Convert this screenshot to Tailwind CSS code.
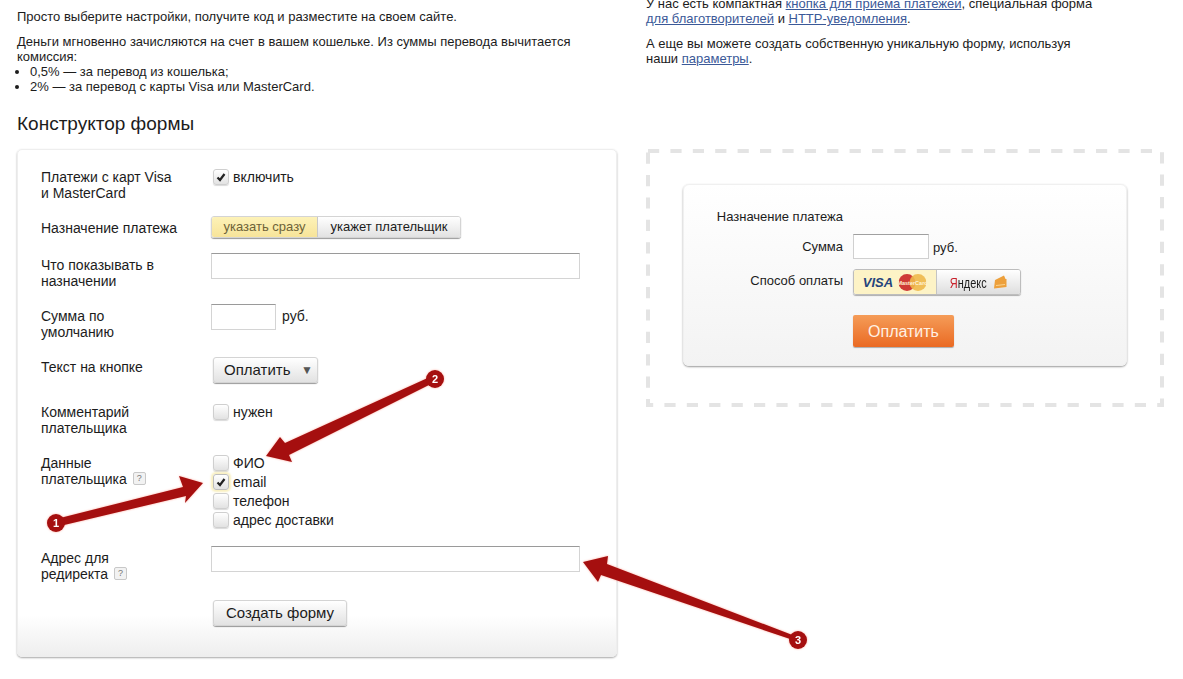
<!DOCTYPE html>
<html lang="ru">
<head>
    <meta charset="UTF-8">
    <title>Конструктор формы</title>
    <script src="https://cdn.jsdelivr.net/npm/@tailwindcss/browser@4"></script>
</head>
<body class="bg-white overflow-hidden h-[679px] relative font-['Liberation_Sans',Arial,sans-serif] text-[#1c1c1c]">
    <div class="flex pl-[17px] items-start">
        <!-- left column -->
        <div class="w-[600px] pt-[9px] shrink-0">
            <div class="text-[13px] leading-[15px]">
                <p>Просто выберите настройки, получите код и разместите на своем сайте.</p>
                <p class="mt-[10px] w-[570px]">Деньги мгновенно зачисляются на счет в вашем кошельке. Из суммы перевода вычитается комиссия:</p>
                <ul class="list-disc pl-[13px]">
                    <li>0,5% — за перевод из кошелька;</li>
                    <li>2% — за перевод с карты Visa или MasterCard.</li>
                </ul>
            </div>
            <h2 class="text-[19px] leading-[22px] mt-[19px]">Конструктор формы</h2>

            <div class="mt-[14px] h-[508px] rounded-[5px] border border-[#eeeeee] bg-[linear-gradient(to_bottom,#ffffff_0,#ffffff_92%,#eeeeee_100%)] shadow-[0_1px_2px_rgba(0,0,0,0.35)] pl-[23px] pt-[19px] text-[14px] leading-[16px]">
                <!-- visa / mastercard -->
                <div class="grid grid-cols-[170px_1fr] h-[47px]">
                    <div>Платежи с карт Visa<br>и MasterCard</div>
                    <label class="flex items-start gap-[4px] pl-[2px]">
                        <span class="w-[16px] h-[16px] rounded-[3px] border border-[#cfcfcf] bg-[linear-gradient(to_bottom,#ffffff,#e2e2e2)] shadow-[0_1px_1px_rgba(0,0,0,0.15)] flex items-center justify-center">
                            <svg viewBox="0 0 12 12" class="w-[12px] h-[12px]"><path d="M2.5 6.5 L5 9 L9.5 3" fill="none" stroke="#222" stroke-width="2.2"/></svg>
                        </span>
                        <span>включить</span>
                    </label>
                </div>
                <!-- purpose -->
                <div class="grid grid-cols-[170px_1fr] h-[37px] items-start">
                    <div class="pt-[4px]">Назначение платежа</div>
                    <div class="flex w-[250px] h-[22px] rounded-[3px] shadow-[0_1px_1px_rgba(0,0,0,0.4)] border border-[#d4d4d4] text-[13px] leading-[20px] overflow-hidden">
                        <div class="w-[106px] text-center text-[#6d6339] bg-[linear-gradient(to_bottom,#fdf2b8,#f7e49a)] border-r border-[#c8c8c8]">указать сразу</div>
                        <div class="flex-1 text-center bg-[linear-gradient(to_bottom,#ffffff,#e2e2e2)]">укажет плательщик</div>
                    </div>
                </div>
                <!-- what to show -->
                <div class="grid grid-cols-[170px_1fr] h-[51px] items-start">
                    <div class="pt-[4px]">Что показывать в<br>назначении</div>
                    <div class="w-[369px] h-[26px] border border-[#d4d4d4] border-t-[#9a9a9a] bg-white"></div>
                </div>
                <!-- default sum -->
                <div class="grid grid-cols-[170px_1fr] h-[53px] items-start">
                    <div class="pt-[4px]">Сумма по<br>умолчанию</div>
                    <div class="flex items-start gap-[6px]">
                        <div class="w-[65px] h-[26px] border border-[#d4d4d4] border-t-[#9a9a9a] bg-white"></div>
                        <span class="pt-[4px]">руб.</span>
                    </div>
                </div>
                <!-- button text -->
                <div class="grid grid-cols-[170px_1fr] h-[47px] items-start">
                    <div class="pt-[2px]">Текст на кнопке</div>
                    <div class="ml-[2px] w-[105px] h-[26px] rounded-[3px] border border-[#d4d4d4] bg-[linear-gradient(to_bottom,#ffffff,#e2e2e2)] shadow-[0_1px_1px_rgba(0,0,0,0.4)] flex items-center justify-between pl-[10px] pr-[4px] text-[15px]">
                        <span>Оплатить</span><span class="text-[12px] text-[#555555]">▼</span>
                    </div>
                </div>
                <!-- comment -->
                <div class="grid grid-cols-[170px_1fr] h-[51px] items-start">
                    <div>Комментарий<br>плательщика</div>
                    <label class="flex items-start gap-[4px] pl-[2px]">
                        <span class="w-[16px] h-[16px] rounded-[3px] border border-[#cfcfcf] bg-[linear-gradient(to_bottom,#ffffff,#e2e2e2)] shadow-[0_1px_1px_rgba(0,0,0,0.15)]"></span>
                        <span>нужен</span>
                    </label>
                </div>
                <!-- payer data -->
                <div class="grid grid-cols-[170px_1fr] h-[91px] items-start">
                    <div>Данные<br>плательщика
                        <span class="inline-block w-[13px] h-[13px] mt-[1px] ml-[2px] rounded-[2px] border border-[#c8c8c8] bg-[#f2f2f2] text-[9px] leading-[11px] text-center text-[#777777] align-top">?</span>
                    </div>
                    <div class="flex flex-col gap-[3px] pl-[2px]">
                        <label class="flex items-start gap-[4px]">
                            <span class="w-[16px] h-[16px] rounded-[3px] border border-[#cfcfcf] bg-[linear-gradient(to_bottom,#ffffff,#e2e2e2)] shadow-[0_1px_1px_rgba(0,0,0,0.15)]"></span>
                            <span>ФИО</span>
                        </label>
                        <label class="flex items-start gap-[4px]">
                            <span class="w-[16px] h-[16px] rounded-[3px] border border-[#bdbdbd] bg-[linear-gradient(to_bottom,#ffffff,#e2e2e2)] shadow-[0_0_2px_2px_rgba(245,230,150,0.6)] flex items-center justify-center">
                                <svg viewBox="0 0 12 12" class="w-[12px] h-[12px]"><path d="M2.5 6.5 L5 9 L9.5 3" fill="none" stroke="#222" stroke-width="2.2"/></svg>
                            </span>
                            <span>email</span>
                        </label>
                        <label class="flex items-start gap-[4px]">
                            <span class="w-[16px] h-[16px] rounded-[3px] border border-[#cfcfcf] bg-[linear-gradient(to_bottom,#ffffff,#e2e2e2)] shadow-[0_1px_1px_rgba(0,0,0,0.15)]"></span>
                            <span>телефон</span>
                        </label>
                        <label class="flex items-start gap-[4px]">
                            <span class="w-[16px] h-[16px] rounded-[3px] border border-[#cfcfcf] bg-[linear-gradient(to_bottom,#ffffff,#e2e2e2)] shadow-[0_1px_1px_rgba(0,0,0,0.15)]"></span>
                            <span>адрес доставки</span>
                        </label>
                    </div>
                </div>
                <!-- redirect -->
                <div class="grid grid-cols-[170px_1fr] h-[54px] items-start">
                    <div class="pt-[4px]">Адрес для<br>редиректа
                        <span class="inline-block w-[13px] h-[13px] mt-[1px] ml-[2px] rounded-[2px] border border-[#c8c8c8] bg-[#f2f2f2] text-[9px] leading-[11px] text-center text-[#777777] align-top">?</span>
                    </div>
                    <div class="w-[369px] h-[26px] border border-[#d4d4d4] border-t-[#9a9a9a] bg-white"></div>
                </div>
                <!-- submit -->
                <div class="grid grid-cols-[170px_1fr]">
                    <div></div>
                    <div class="ml-[2px] w-[134px] h-[26px] rounded-[3px] border border-[#d4d4d4] bg-[linear-gradient(to_bottom,#ffffff,#e2e2e2)] shadow-[0_1px_1px_rgba(0,0,0,0.4)] flex items-center justify-center text-[15px]">Создать форму</div>
                </div>
            </div>
        </div>

        <!-- right column -->
        <div class="ml-[29px] w-[518px] -mt-[4px] shrink-0">
            <div class="text-[13px] leading-[15px]">
                <p>У нас есть компактная <a class="text-[#3b5998] underline">кнопка для приема платежей</a>, специальная форма<br><a class="text-[#3b5998] underline">для благотворителей</a> и <a class="text-[#3b5998] underline">HTTP-уведомления</a>.</p>
                <p class="mt-[10px]">А еще вы можете создать собственную уникальную форму, используя<br>наши <a class="text-[#3b5998] underline">параметры</a>.</p>
            </div>

            <div class="relative mt-[83px] h-[258px] pl-[37px] pt-[35px]">
                <svg class="absolute inset-0 w-[518px] h-[258px]" viewBox="0 0 518 258"><rect x="2" y="2" width="514" height="254" fill="none" stroke="#e4e4e4" stroke-width="4" stroke-dasharray="11.2 11.2"/></svg>
                <!-- preview card -->
                <div class="relative w-[444px] h-[182px] rounded-[6px] border border-[#f0f0f0] bg-[linear-gradient(to_bottom,#ffffff,#f3f3f3)] shadow-[0_1px_2px_rgba(0,0,0,0.4)] text-[13px] leading-[15px] pt-[24px]">
                    <div class="grid grid-cols-[159px_1fr] gap-x-[10px] h-[25px]">
                        <div class="text-right">Назначение платежа</div>
                    </div>
                    <div class="grid grid-cols-[159px_1fr] gap-x-[10px] h-[35px] items-start">
                        <div class="text-right pt-[5px]">Сумма</div>
                        <div class="flex items-start gap-[4px]">
                            <div class="w-[76px] h-[25px] border border-[#d0d0d0] border-t-[#a0a0a0] bg-white"></div>
                            <span class="pt-[6px]">руб.</span>
                        </div>
                    </div>
                    <div class="grid grid-cols-[159px_1fr] gap-x-[10px] h-[46px] items-start">
                        <div class="text-right pt-[4px]">Способ оплаты</div>
                        <div class="flex w-[168px] h-[26px] rounded-[3px] border border-[#bdbdbd] shadow-[0_1px_1px_rgba(0,0,0,0.3)] overflow-hidden">
                            <div class="w-[83px] flex items-center justify-center gap-[5px] bg-[#fdf3c6] border-r border-[#c4c4c4]">
                                <span class="font-bold italic text-[13px] text-[#24437c]">VISA</span>
                                <svg viewBox="0 0 29 17" class="w-[29px] h-[17px]">
                                    <circle cx="9" cy="8.5" r="8.5" fill="#cf3a36"/>
                                    <circle cx="20" cy="8.5" r="8.5" fill="#eeb84a" fill-opacity="0.9"/>
                                    <text x="14.5" y="10.5" text-anchor="middle" font-size="5.5" font-weight="700" fill="#fff3d6" font-family="Liberation Sans">MasterCard</text>
                                </svg>
                            </div>
                            <div class="flex-1 flex items-center justify-center gap-[3px] bg-[linear-gradient(to_bottom,#ffffff,#dedede)]">
                                <span class="inline-block -mx-[7px] scale-x-[0.73] text-[15px]"><span class="text-[#c8212b]">Я</span>ндекс</span>
                                <svg viewBox="0 0 14 14" class="w-[14px] h-[14px] ml-[4px]">
                                    <path d="M2 5 L11 0.5 L12.5 4 L13.5 4 V12 L1 13.5 Z" fill="#eda03c"/>
                                    <path d="M3 10.5 L12 9.5" stroke="#fbd48e" stroke-width="1"/>
                                </svg>
                            </div>
                        </div>
                    </div>
                    <div class="grid grid-cols-[159px_1fr] gap-x-[10px]">
                        <div></div>
                        <div class="w-[101px] h-[32px] rounded-[2px] bg-[linear-gradient(to_bottom,#f59c58,#ea6a23)] shadow-[0_1px_1px_rgba(0,0,0,0.3)] flex items-center justify-center text-[16px] text-[#fff1e4]">Оплатить</div>
                    </div>
                </div>
            </div>
        </div>
    </div>

    <!-- annotation arrows -->
    <svg class="absolute inset-0 w-[1183px] h-[679px] pointer-events-none drop-shadow-[0_0_1px_rgba(255,120,100,0.6)]" viewBox="0 0 1183 679">
        <polygon points="60,518 183,487 179,476 203,483 185,503 186,496 60,526" fill="#a50f0f"/>
        <polygon points="432,376 285,443 280,437 266,456 292,462 289,455 435,382" fill="#a50f0f"/>
        <polygon points="795,636 607,564 608,556 583,562 598,582 601,575 793,640" fill="#a50f0f"/>
        <circle cx="56" cy="523" r="9" fill="#a50f0f"/>
        <circle cx="435" cy="379" r="9" fill="#a50f0f"/>
        <circle cx="798" cy="640" r="9" fill="#a50f0f"/>
        <text x="56" y="527" text-anchor="middle" font-size="11" font-weight="700" fill="#ffffff" font-family="Liberation Sans">1</text>
        <text x="435" y="383" text-anchor="middle" font-size="11" font-weight="700" fill="#ffffff" font-family="Liberation Sans">2</text>
        <text x="798" y="644" text-anchor="middle" font-size="11" font-weight="700" fill="#ffffff" font-family="Liberation Sans">3</text>
    </svg>
</body>
</html>
